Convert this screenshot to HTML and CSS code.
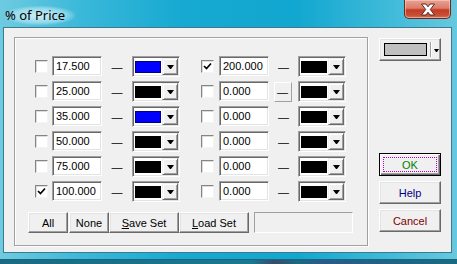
FILE: index.html
```html
<!DOCTYPE html>
<html>
<head>
<meta charset="utf-8">
<link rel="stylesheet" href="styles.css">
</head>
<body>
<div class="window">
  <div class="titlebar">
    <span class="title">% of Price</span>
    <div class="close">
      <svg width="22" height="13" viewBox="0 0 22 13"><path d="M4.5 1 H9 L11 3.8 L13 1 H17.5 L13.3 6.5 L17.5 12 H13 L11 9.2 L9 12 H4.5 L8.7 6.5 Z" fill="#fff" stroke="#5a2a22" stroke-width="1" stroke-linejoin="round"/></svg>
    </div>
  </div>
  <div class="client">
    <div class="group">
      <div class="rows">
        <div class="row">
          <span class="cb"></span><span class="edit">17.500</span><span class="dash">—</span><span class="combo"><span class="swatch blue"></span><span class="drop"><i class="arrow"></i></span></span>
          <span class="cb cb2 checked"><svg width="9" height="9" viewBox="0 0 9 9"><path d="M1 4 L3.5 6.5 L8 1.5" fill="none" stroke="#000" stroke-width="1.7"/></svg></span><span class="edit">200.000</span><span class="dash">—</span><span class="combo"><span class="swatch"></span><span class="drop"><i class="arrow"></i></span></span>
        </div>
        <div class="row">
          <span class="cb"></span><span class="edit">25.000</span><span class="dash">—</span><span class="combo"><span class="swatch"></span><span class="drop"><i class="arrow"></i></span></span>
          <span class="cb cb2"></span><span class="edit">0.000</span><span class="dash"><span class="dashbtn">—</span></span><span class="combo"><span class="swatch"></span><span class="drop"><i class="arrow"></i></span></span>
        </div>
        <div class="row">
          <span class="cb"></span><span class="edit">35.000</span><span class="dash">—</span><span class="combo"><span class="swatch blue"></span><span class="drop"><i class="arrow"></i></span></span>
          <span class="cb cb2"></span><span class="edit">0.000</span><span class="dash">—</span><span class="combo"><span class="swatch"></span><span class="drop"><i class="arrow"></i></span></span>
        </div>
        <div class="row">
          <span class="cb"></span><span class="edit">50.000</span><span class="dash">—</span><span class="combo"><span class="swatch"></span><span class="drop"><i class="arrow"></i></span></span>
          <span class="cb cb2"></span><span class="edit">0.000</span><span class="dash">—</span><span class="combo"><span class="swatch"></span><span class="drop"><i class="arrow"></i></span></span>
        </div>
        <div class="row">
          <span class="cb"></span><span class="edit">75.000</span><span class="dash">—</span><span class="combo"><span class="swatch"></span><span class="drop"><i class="arrow"></i></span></span>
          <span class="cb cb2"></span><span class="edit">0.000</span><span class="dash">—</span><span class="combo"><span class="swatch"></span><span class="drop"><i class="arrow"></i></span></span>
        </div>
        <div class="row">
          <span class="cb checked"><svg width="9" height="9" viewBox="0 0 9 9"><path d="M1 4 L3.5 6.5 L8 1.5" fill="none" stroke="#000" stroke-width="1.7"/></svg></span><span class="edit">100.000</span><span class="dash">—</span><span class="combo"><span class="swatch"></span><span class="drop"><i class="arrow"></i></span></span>
          <span class="cb cb2"></span><span class="edit">0.000</span><span class="dash">—</span><span class="combo"><span class="swatch"></span><span class="drop"><i class="arrow"></i></span></span>
        </div>
      </div>
      <div class="buttons">
        <span class="btn w40">All</span>
        <span class="btn w40 gap1">None</span>
        <span class="btn w70"><u>S</u>ave Set</span>
        <span class="btn w70"><u>L</u>oad Set</span>
        <span class="field"></span>
      </div>
    </div>
    <div class="side">
      <div class="bigcombo"><span class="grayswatch"></span><span class="sep"></span><i class="arrow"></i></div>
      <div class="spacer"></div>
      <div class="btn sidebtn default"><span class="focus ok">OK</span></div>
      <div class="btn sidebtn help">Help</div>
      <div class="btn sidebtn cancel">Cancel</div>
    </div>
  </div>
</div>
<div class="desktop"></div>
</body>
</html>
```
FILE: styles.css
```css
html, body {
  margin: 0;
  padding: 0;
  width: 457px;
  height: 264px;
  overflow: hidden;
  background: #1e5a6a;
}
.window {
  width: 457px;
  height: 260px;
  box-sizing: border-box;
  padding: 0 5px 6px 3px;
  background: linear-gradient(90deg, #6ecbe0 0%, #3ab8d9 18%, #16a9d1 40%, #12a7d0 65%, #3fbad9 85%, #67c8df 100%);
  border-bottom: 1px solid #1d6277;
  display: flex;
  flex-direction: column;
}
.titlebar {
  height: 27px;
  display: flex;
  justify-content: space-between;
  align-items: flex-start;
  margin-right: -5px;
  margin-left: -3px;
  padding-left: 5px;
  padding-right: 6px;
}
.title {
  font-family: "Noto Sans", "Open Sans", sans-serif;
  font-size: 13px;
  line-height: 15px;
  margin-top: 6px;
  color: #000;
  background: radial-gradient(ellipse at center, rgba(230,248,252,0.85) 0%, rgba(200,238,247,0.5) 55%, rgba(200,238,247,0) 75%);
  padding: 2px 10px 2px 0;
}
.close {
  width: 47px;
  height: 19px;
  box-sizing: border-box;
  border: 1px solid #6b2a1f;
  border-top: none;
  border-radius: 0 0 5px 5px;
  background: linear-gradient(180deg, #e9a393 0%, #dc7c68 45%, #c23c24 55%, #c84e35 85%, #d6735b 100%);
  box-shadow: inset 0 0 0 1px rgba(255,220,210,0.5);
  display: flex;
  align-items: center;
  justify-content: center;
}
.client {
  flex: 1;
  background: #f0f0f0;
  border: 1px solid #3f7a8c;
  display: flex;
  align-items: flex-start;
  padding: 9px 0 0 10px;
  font-family: "Liberation Sans", Arial, sans-serif;
  font-size: 11px;
  color: #000;
}
.group {
  width: 354px;
  height: 209px;
  box-sizing: border-box;
  border: 1px solid #a0a0a0;
  box-shadow: inset 1px 1px #fff, 1px 1px #fff;
  padding: 18px 0 0 20px;
  display: flex;
  flex-direction: column;
}
.rows {
  display: flex;
  flex-direction: column;
  gap: 4px;
}
.row {
  display: flex;
  align-items: center;
  height: 21px;
}
.cb {
  width: 13px;
  height: 13px;
  box-sizing: border-box;
  background: #fff;
  border: 1px solid;
  border-color: #858585 #f4f4f4 #f4f4f4 #858585;
  box-shadow: inset 1px 1px #dcdcdc;
  display: flex;
  align-items: center;
  justify-content: center;
}
.cb2 {
  margin-left: 21px;
}
.edit {
  margin-left: 4px;
  width: 50px;
  height: 20px;
  box-sizing: border-box;
  background: #fff;
  border: 1px solid;
  border-color: #a0a0a0 #fff #fff #a0a0a0;
  box-shadow: inset 1px 1px #696969, inset -1px -1px #e3e3e3;
  padding: 2px 0 0 3px;
  line-height: 14px;
  margin-top: -1px;
}
.cb2 + .edit {
  margin-left: 5px;
}
.dash {
  width: 30px;
  display: flex;
  justify-content: center;
  align-items: center;
  line-height: 14px;
}
.cb2 ~ .dash {
  width: 29px;
}
.dashbtn {
  width: 18px;
  height: 20px;
  box-sizing: border-box;
  border: 1px solid;
  border-color: #fff #a0a0a0 #a0a0a0 #fff;
  display: flex;
  align-items: center;
  justify-content: center;
  margin-left: -2px;
}
.combo {
  width: 48px;
  height: 21px;
  box-sizing: border-box;
  border: 1px solid;
  border-color: #a0a0a0 #fff #fff #a0a0a0;
  box-shadow: inset 1px 1px #696969, inset -1px -1px #e3e3e3;
  background: #fff;
  padding: 2px;
  display: flex;
  gap: 1px;
}
.swatch {
  flex: 1;
  background: #000;
  margin: 2px 0 1px 0;
  border: 1px solid #000;
}
.swatch.blue {
  background: #0000ff;
  border-color: #000080;
}
.drop {
  width: 16px;
  box-sizing: border-box;
  background: #f0f0f0;
  border: 1px solid;
  border-color: #f0f0f0 #696969 #696969 #f0f0f0;
  box-shadow: inset 1px 1px #fff, inset -1px -1px #a0a0a0;
  display: flex;
  align-items: center;
  justify-content: center;
  margin: -1px -1px -1px 0;
}
.arrow {
  display: block;
  width: 1px;
  height: 0;
  border-top: 4px solid #000;
  border-left: 3px solid transparent;
  border-right: 3px solid transparent;
  margin-top: 1px;
}
.buttons {
  display: flex;
  margin-top: 10px;
  margin-left: -7px;
  height: 21px;
}
.btn {
  box-sizing: border-box;
  background: #f0f0f0;
  border: 1px solid;
  border-color: #fff #696969 #696969 #fff;
  box-shadow: inset -1px -1px #a0a0a0, inset 1px 1px #e3e3e3;
  display: flex;
  align-items: center;
  justify-content: center;
  line-height: 14px;
}
.w40 { width: 40px; }
.w70 { width: 70px; }
.gap1 { margin-left: 1px; }
.field {
  margin-left: 5px;
  width: 99px;
  box-sizing: border-box;
  border: 1px solid;
  border-color: #a0a0a0 #fff #fff #a0a0a0;
}
.side {
  margin-left: 11px;
  margin-top: 1px;
  width: 62px;
  display: flex;
  flex-direction: column;
}
.bigcombo {
  height: 23px;
  box-sizing: border-box;
  background: #f0f0f0;
  border: 1px solid;
  border-color: #fff #696969 #696969 #fff;
  box-shadow: inset -1px -1px #a0a0a0, inset 1px 1px #e3e3e3;
  display: flex;
  align-items: center;
  padding-left: 4px;
}
.grayswatch {
  width: 43px;
  height: 13px;
  box-sizing: border-box;
  background: #c0c0c0;
  border: 1px solid #000;
}
.sep {
  width: 1px;
  height: 15px;
  background: #a0a0a0;
  box-shadow: 1px 0 #fff;
  margin-left: 3px;
  margin-right: 3px;
}
.bigcombo .arrow {
  border-top-width: 3px;
  border-left-width: 2px;
  border-right-width: 2px;
  width: 1px;
}
.spacer {
  height: 92px;
}
.sidebtn {
  height: 23px;
  margin-bottom: 5px;
}
.default {
  border: 1px solid #000;
  box-shadow: inset 1px 1px #fff, inset -1px -1px #696969, inset -2px -2px #a0a0a0;
}
.focus {
  width: 54px;
  height: 15px;
  box-sizing: border-box;
  border: 1px dotted #c000c0;
  display: flex;
  align-items: center;
  justify-content: center;
}
.ok { color: #008000; }
.help { color: #000080; }
.cancel { color: #800000; }
.desktop {
  height: 4px;
  background: linear-gradient(90deg, #186b82 0%, #1a7890 55%, #3a4a6a 60%, #1a6a80 65%, #2a5a8a 70%, #186b82 100%);
}
```
